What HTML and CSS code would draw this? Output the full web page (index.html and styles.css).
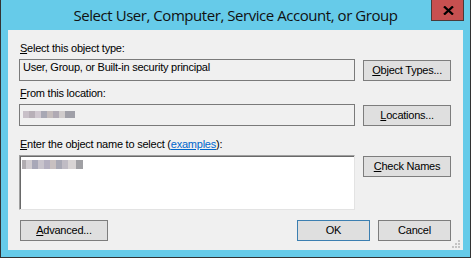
FILE: index.html
```html
<!DOCTYPE html>
<html>
<head>
<meta charset="utf-8">
<link rel="stylesheet" href="styles.css">
</head>
<body>
<div class="window">
  <div class="titlebar">
    <div class="title">Select User, Computer, Service Account, or Group</div>
    <div class="close">
      <svg width="11" height="9" viewBox="0 0 11 9"><path d="M1 0.5 L10 8.5 M10 0.5 L1 8.5" stroke="#000" stroke-width="2.3" fill="none"/></svg>
    </div>
  </div>
  <div class="client">
    <div class="label lbl1"><u>S</u>elect this object type:</div>
    <div class="row">
      <div class="field">User, Group, or Built-in security principal</div>
      <button class="btn btn-side"><u>O</u>bject Types...</button>
    </div>
    <div class="label lbl2"><u>F</u>rom this location:</div>
    <div class="row">
      <div class="field"><span class="blur blur1"></span></div>
      <button class="btn btn-side"><u>L</u>ocations...</button>
    </div>
    <div class="label lbl3"><u>E</u>nter the object name to select (<a class="link">examples</a>):</div>
    <div class="row">
      <div class="textarea"><span class="blur blur2"></span></div>
      <button class="btn btn-side"><u>C</u>heck Names</button>
    </div>
    <div class="bottom">
      <button class="btn btn-adv"><u>A</u>dvanced...</button>
      <div class="spacer"></div>
      <button class="btn btn-ok">OK</button>
      <button class="btn btn-cancel">Cancel</button>
    </div>
    <svg class="grip" width="9" height="9" viewBox="0 0 9 9">
      <rect x="7" y="1" width="2" height="2" fill="#c4c4c4"/>
      <rect x="4" y="4" width="2" height="2" fill="#c4c4c4"/>
      <rect x="7" y="4" width="2" height="2" fill="#c4c4c4"/>
      <rect x="1" y="7" width="2" height="2" fill="#c4c4c4"/>
      <rect x="4" y="7" width="2" height="2" fill="#c4c4c4"/>
      <rect x="7" y="7" width="2" height="2" fill="#c4c4c4"/>
    </svg>
  </div>
</div>
</body>
</html>
```

FILE: styles.css
```css
* { box-sizing: border-box; }
html, body { margin: 0; padding: 0; background: #fff; }
.window {
  width: 471px;
  height: 258px;
  background: #66cbe9;
  border-left: 1px solid #333;
  border-right: 1px solid #333;
  border-bottom: 1px solid #333;
  display: flex;
  flex-direction: column;
  align-items: center;
}
.titlebar {
  width: 469px;
  height: 30px;
  display: grid;
  grid-template-columns: 1fr auto 1fr;
  align-items: start;
}
.title {
  grid-column: 2;
  font-family: "Open Sans", "Noto Sans", sans-serif;
  font-size: 15px;
  letter-spacing: -0.45px;
  line-height: 20px;
  padding-top: 5px;
  color: #111;
  white-space: nowrap;
}
.close {
  grid-column: 3;
  justify-self: end;
  margin-right: 6px;
  width: 33px;
  height: 21px;
  background: #c75050;
  border: 1px solid #4a3a3a;
  border-top: none;
  display: flex;
  align-items: center;
  justify-content: center;
  padding-top: 1px;
}
.close svg { display: block; margin-left: 1px; }
.client {
  position: relative;
  width: 455px;
  height: 220px;
  background: #f0f0f0;
  padding: 12px 12px 0 11px;
  font-family: "Liberation Sans", Arial, sans-serif;
  font-size: 11px;
  letter-spacing: -0.23px;
  line-height: 13px;
  color: #000;
}
.label { padding-left: 1px; white-space: nowrap; }
.lbl1 { margin-bottom: 4px; }
.lbl2 { margin-top: 6px; margin-bottom: 4px; }
.lbl3 { margin-top: 12px; margin-bottom: 4px; }
.link { color: #0066cc; text-decoration: underline; }
.row { display: flex; align-items: flex-start; gap: 7px; }
.field {
  width: 337px;
  height: 22px;
  border: 1px solid #7a7a7a;
  padding: 1px 0 0 3px;
  white-space: nowrap;
}
.textarea {
  width: 336px;
  height: 55px;
  background: #fff;
  border-top: 1px solid #a0a0a0;
  border-left: 1px solid #a0a0a0;
  border-right: 1px solid #e3e3e3;
  border-bottom: 1px solid #e3e3e3;
  box-shadow: inset 1px 1px 0 #696969;
  padding: 3px 0 0 2px;
}
.btn {
  font-family: "Liberation Sans", Arial, sans-serif;
  font-size: 11px;
  letter-spacing: -0.23px;
  line-height: 13px;
  color: #000;
  background: #dfdfdf;
  border: 1px solid #7d7d7d;
  height: 21px;
  padding: 0;
  margin: 0;
  text-align: center;
}
.btn-side { width: 88px; margin-top: 1px; margin-left: 1px; }
.bottom { display: flex; margin-top: 10px; gap: 8px; }
.btn-adv { width: 88px; margin-left: 1px; }
.spacer { flex: 1; }
.btn-ok { width: 73px; border-color: #3c7fb1; }
.btn-cancel { width: 73px; }
.blur { display: inline-block; filter: blur(0.6px); }
.blur1 {
  width: 52px; height: 7px; margin-top: 5px;
  background: linear-gradient(90deg, #c8c0c8 0 6px, #b8b0b8 6px 12px, #d0c8d0 12px 18px, #a8a8b4 18px 24px, #c4bcbc 24px 30px, #b0aab4 30px 36px, #d0cccc 36px 42px, #a0a0a8 42px 52px);
}
.blur2 {
  width: 61px; height: 9px;
  background: linear-gradient(90deg, #b0acb0 0 4px, #d0ccd0 4px 10px, #a8a8b8 10px 16px, #c8c4cc 16px 22px, #b4b0c0 22px 28px, #c8c0c0 28px 34px, #a8a8b4 34px 40px, #c0bcc4 40px 46px, #d8d4d4 46px 54px, #a0a0a4 54px 61px);
}
.grip { position: absolute; right: 3px; bottom: 2px; }
```
